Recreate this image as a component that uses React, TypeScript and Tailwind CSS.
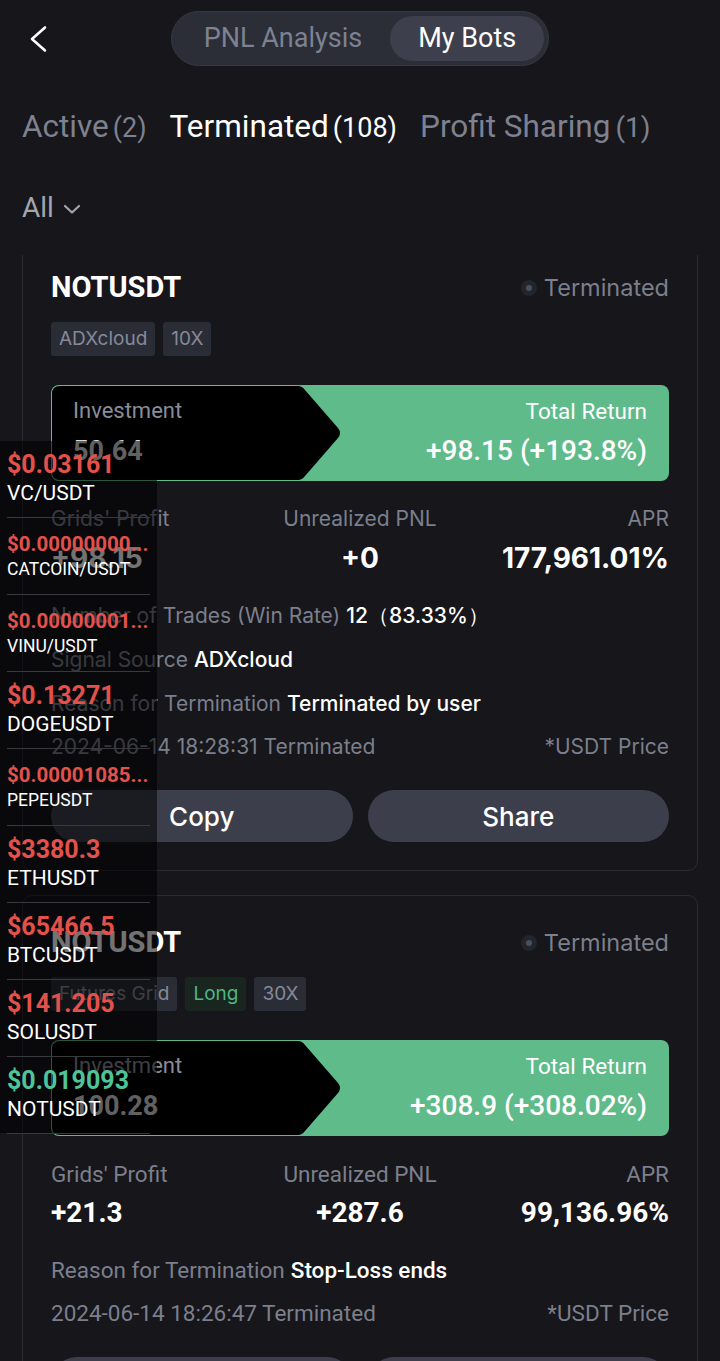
import React from 'react';

interface Ticker {
  price: string;
  symbol: string;
  up?: boolean;
  small?: boolean;
}

const tickers: Ticker[] = [
  { price: '$0.03161', symbol: 'VC/USDT' },
  { price: '$0.00000000...', symbol: 'CATCOIN/USDT', small: true },
  { price: '$0.00000001...', symbol: 'VINU/USDT', small: true },
  { price: '$0.13271', symbol: 'DOGEUSDT' },
  { price: '$0.00001085...', symbol: 'PEPEUSDT', small: true },
  { price: '$3380.3', symbol: 'ETHUSDT' },
  { price: '$65466.5', symbol: 'BTCUSDT' },
  { price: '$141.205', symbol: 'SOLUSDT' },
  { price: '$0.019093', symbol: 'NOTUSDT', up: true },
];

interface Tag {
  label: string;
  long?: boolean;
}

interface Bot {
  tags: Tag[];
  investment: string;
  totalReturn: string;
  grids: string;
  unrealized: string;
  apr: string;
  extra: { label: string; value: string }[];
  date: string;
  // card 1 renders with a wider face than card 2 in the screenshot
  font: string;
  label: string;
}

const bots: Bot[] = [
  {
    tags: [{ label: 'ADXcloud' }, { label: '10X' }],
    investment: '50.64',
    totalReturn: '+98.15 (+193.8%)',
    grids: '+98.15',
    unrealized: '+0',
    apr: '177,961.01%',
    extra: [
      { label: 'Number of Trades (Win Rate)', value: '12（83.33%）' },
      { label: 'Signal Source', value: 'ADXcloud' },
      { label: 'Reason for Termination', value: 'Terminated by user' },
    ],
    date: '2024-06-14 18:28:31 Terminated',
    font: "font-['Inter',sans-serif]",
    label: 'text-[21px]',
  },
  {
    tags: [{ label: 'Futures Grid' }, { label: 'Long', long: true }, { label: '30X' }],
    investment: '100.28',
    totalReturn: '+308.9 (+308.02%)',
    grids: '+21.3',
    unrealized: '+287.6',
    apr: '99,136.96%',
    extra: [{ label: 'Reason for Termination', value: 'Stop-Loss ends' }],
    date: '2024-06-14 18:26:47 Terminated',
    font: "font-['Roboto',sans-serif]",
    label: 'text-[22.5px]',
  },
];

const BotCard: React.FC<{ bot: Bot; className?: string }> = ({ bot, className }) => {
  return (
    <div className={`border border-[#2a2c34] rounded-[10px] px-[28px] pt-[30px] pb-[28px] ${className ?? ''}`}>
      {/* Title row */}
      <div className="flex items-center justify-between h-[34px]">
        <span className="text-white text-[29px] font-bold font-['Roboto',sans-serif]">NOTUSDT</span>
        <div className="flex items-center gap-[7px]">
          <span className="w-[16px] h-[16px] rounded-full bg-[#23252d] flex items-center justify-center">
            <span className="w-[6px] h-[6px] rounded-full bg-[#4b4f5c]" />
          </span>
          <span className="text-[23.5px] text-[#7c7f8c] font-['Inter',sans-serif]">Terminated</span>
        </div>
      </div>

      {/* Tags */}
      <div className="flex gap-[8px] mt-[17px]">
        {bot.tags.map((t) => (
          <span
            key={t.label}
            className={`h-[34px] px-[8px] flex items-center rounded-[3px] text-[19px] font-['Inter',sans-serif] ${
              t.long ? 'bg-[#19251f] text-[#4fb683]' : 'bg-[#2a2d36] text-[#868996]'
            }`}
          >
            {t.label}
          </span>
        ))}
      </div>

      {/* Investment / Total return banner */}
      <div className="relative mt-[29px] h-[96px] rounded-[8px] bg-[#5fbb8a] font-['Roboto',sans-serif]">
        <svg className="absolute left-0 top-0" width="292" height="96" viewBox="0 0 292 96">
          <path
            d="M9 1 H247 Q251 1 254 5 L287 43 Q291 48 287 53 L254 91 Q251 95 247 95 H9 Q1 95 1 87 V9 Q1 1 9 1 Z"
            fill="#000"
          />
        </svg>
        <div className="relative flex justify-between h-full px-[22px] pt-[12px]">
          <div className="flex flex-col">
            <span className="text-[22px] leading-[28px] text-[#8a8d98]">Investment</span>
            <span className="text-[27px] leading-[36px] font-bold text-[#d8d8d8] mt-[8px]">{bot.investment}</span>
          </div>
          <div className="flex flex-col items-end">
            <span className="text-[22.5px] leading-[28px] text-white">Total Return</span>
            <span className="text-[28px] leading-[36px] font-medium text-white mt-[8px]">{bot.totalReturn}</span>
          </div>
        </div>
      </div>

      <div className={bot.font}>
        {/* Stats */}
        <div className={`grid grid-cols-3 mt-[26px] ${bot.label}`}>
          <div className="flex flex-col">
            <span className="leading-[24px] text-[#7c7f8c]">Grids' Profit</span>
            <span className="text-[28px] leading-[32px] font-bold text-white mt-[11px]">{bot.grids}</span>
          </div>
          <div className="flex flex-col items-center">
            <span className="leading-[24px] text-[#7c7f8c]">Unrealized PNL</span>
            <span className="text-[28px] leading-[32px] font-bold text-white mt-[11px]">{bot.unrealized}</span>
          </div>
          <div className="flex flex-col items-end">
            <span className="leading-[24px] text-[#7c7f8c]">APR</span>
            <span className="text-[28px] leading-[32px] font-bold text-white mt-[11px]">{bot.apr}</span>
          </div>
        </div>

        {/* Extra rows */}
        <div className={`flex flex-col mt-[20px] ${bot.label}`}>
          {bot.extra.map((row) => (
            <div key={row.label} className="h-[44px] flex items-center">
              <span className="text-[#7c7f8c]">{row.label}</span>
              <span className="text-white font-medium ml-[6px]">{row.value}</span>
            </div>
          ))}
          <div className="h-[42px] flex items-center justify-between text-[#7c7f8c]">
            <span>{bot.date}</span>
            <span>*USDT Price</span>
          </div>
        </div>

        {/* Actions */}
        <div className="flex gap-[15px] mt-[22px]">
          <button className="flex-1 h-[52px] rounded-full bg-[#3c3f4b] text-white text-[26px] font-medium">Copy</button>
          <button className="flex-1 h-[52px] rounded-full bg-[#3c3f4b] text-white text-[26px] font-medium">Share</button>
        </div>
      </div>
    </div>
  );
};

const App: React.FC = () => {
  return (
    <div className="relative w-[720px] h-[1361px] overflow-hidden bg-[#16161b] font-['Roboto',sans-serif]">
      {/* Header */}
      <div className="grid grid-cols-[1fr_auto_1fr] items-center pt-[11px] px-[22px]">
        <svg width="30" height="30" viewBox="0 0 30 30" className="ml-[6px]">
          <polyline points="17,3.5 4,15 17,26.5" fill="none" stroke="#fff" strokeWidth="2.6" strokeLinecap="round" strokeLinejoin="round" />
        </svg>
        <div className="flex items-center h-[55px] p-[4px] rounded-full bg-[#2b2e37] border border-[#363944]">
          <span className="px-[28px] text-[27px] text-[#7d8190]">PNL Analysis</span>
          <span className="h-full px-[28px] flex items-center rounded-full bg-[#3d404c] text-[27px] text-white">My Bots</span>
        </div>
        <div />
      </div>

      {/* Tabs */}
      <div className="flex items-baseline gap-[23px] px-[22px] mt-[37px] h-[40px] text-[31.5px]">
        <span className="text-[#7d8190]">
          Active<span className="text-[27px] ml-[4px]">(2)</span>
        </span>
        <span className="text-white">
          Terminated<span className="text-[27px] ml-[4px]">(108)</span>
        </span>
        <span className="text-[#7d8190]">
          Profit Sharing<span className="text-[28px] ml-[5px]">(1)</span>
        </span>
      </div>

      {/* Filter */}
      <div className="flex items-center gap-[9px] px-[22px] mt-[49px] h-[32px]">
        <span className="text-[28px] text-[#a3a6b1]">All</span>
        <svg width="18" height="12" viewBox="0 0 18 12" className="mt-[2px]">
          <polyline points="2,3 9,9.5 16,3" fill="none" stroke="#a3a6b1" strokeWidth="2.2" strokeLinecap="round" strokeLinejoin="round" />
        </svg>
      </div>

      {/* Bot list */}
      <div className="overflow-hidden mt-[31px] px-[22px] h-[1106px]">
        <div className="-mt-[15px]">
          {bots.map((bot, i) => (
            <BotCard key={bot.date} bot={bot} className={i > 0 ? 'mt-[24px]' : ''} />
          ))}
        </div>
      </div>

      {/* Floating price ticker */}
      <div className="absolute left-0 top-[441px] w-[157px] h-[692px] bg-black/55 px-[7px] font-['Roboto',sans-serif]">
        {tickers.map((t) =>
          t.small ? (
            <div key={t.symbol} className="h-[77px] pt-[13px] border-b border-[#3a3a3e]">
              <div className={`h-[26px] flex items-center font-bold whitespace-nowrap text-[20.5px] ${t.up ? 'text-[#4fc49a]' : 'text-[#e4514b]'}`}>
                {t.price}
              </div>
              <div className="h-[24px] flex items-center text-white whitespace-nowrap text-[17.5px]">{t.symbol}</div>
            </div>
          ) : (
            <div key={t.symbol} className="h-[77px] pt-[10px] border-b border-[#3a3a3e]">
              <div className={`h-[28px] flex items-center font-bold whitespace-nowrap text-[25px] ${t.up ? 'text-[#4fc49a]' : 'text-[#e4514b]'}`}>
                {t.price}
              </div>
              <div className="h-[30px] flex items-center text-white whitespace-nowrap text-[21px]">{t.symbol}</div>
            </div>
          )
        )}
      </div>
    </div>
  );
};

export default App;
